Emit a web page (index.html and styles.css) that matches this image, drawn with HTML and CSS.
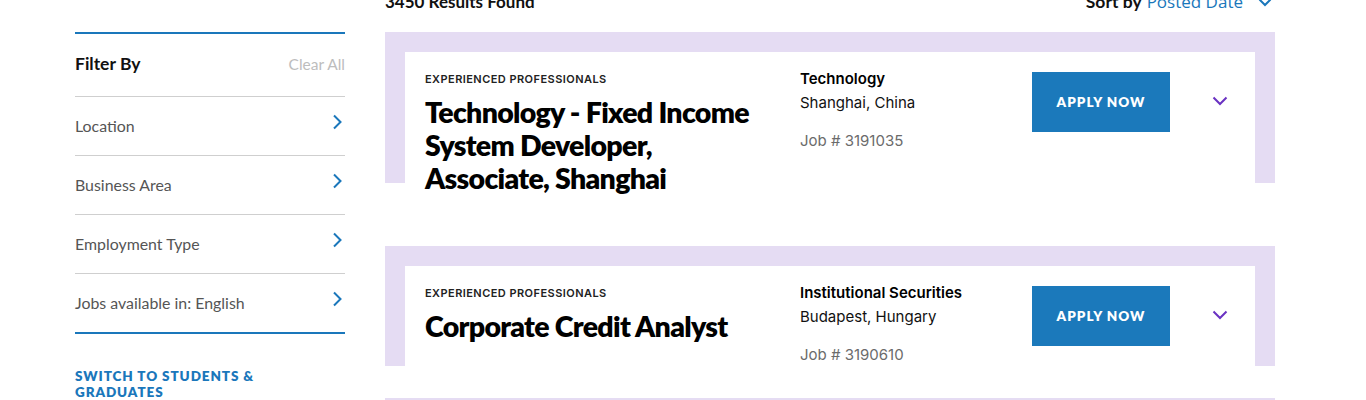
FILE: index.html
```html
<!DOCTYPE html>
<html lang="en">
<head>
<meta charset="utf-8">
<title>Job Search Results</title>
<link rel="stylesheet" href="styles.css">
</head>
<body>
<div class="page">
  <aside class="sidebar">
    <div class="filter">
      <div class="filter-head">
        <span class="filter-title">Filter By</span>
        <a class="clear-all" href="#">Clear All</a>
      </div>
      <ul class="filter-list">
        <li class="filter-row"><span>Location</span>
          <svg class="row-chev" viewBox="0 0 10 16" width="10" height="16"><polyline points="2,1.5 8.5,8 2,14.5" fill="none" stroke="#1a77bb" stroke-width="2"/></svg></li>
        <li class="filter-row"><span>Business Area</span>
          <svg class="row-chev" viewBox="0 0 10 16" width="10" height="16"><polyline points="2,1.5 8.5,8 2,14.5" fill="none" stroke="#1a77bb" stroke-width="2"/></svg></li>
        <li class="filter-row"><span>Employment Type</span>
          <svg class="row-chev" viewBox="0 0 10 16" width="10" height="16"><polyline points="2,1.5 8.5,8 2,14.5" fill="none" stroke="#1a77bb" stroke-width="2"/></svg></li>
        <li class="filter-row"><span>Jobs available in: English</span>
          <svg class="row-chev" viewBox="0 0 10 16" width="10" height="16"><polyline points="2,1.5 8.5,8 2,14.5" fill="none" stroke="#1a77bb" stroke-width="2"/></svg></li>
      </ul>
    </div>
    <a class="switch-link" href="#">Switch to Students &amp; Graduates</a>
  </aside>

  <main class="results">
    <div class="results-head">
      <span class="count">3450 Results Found</span>
      <div class="sort">
        <span class="sort-label">Sort by</span>
        <span class="sort-value">Posted Date</span>
        <svg class="sort-chev" viewBox="0 0 14 9" width="14" height="9"><polyline points="1.5,1.5 7,7 12.5,1.5" fill="none" stroke="#1a77bb" stroke-width="2"/></svg>
      </div>
    </div>

    <article class="job">
      <div class="job-card">
        <div class="job-main">
          <div class="eyebrow">Experienced Professionals</div>
          <h2 class="job-title">Technology - Fixed Income System Developer, Associate, Shanghai</h2>
        </div>
        <div class="job-meta">
          <div class="dept">Technology</div>
          <div class="loc">Shanghai, China</div>
          <div class="jobno">Job # 3191035</div>
        </div>
        <div class="job-action"><a class="apply" href="#">Apply Now</a></div>
        <div class="job-toggle">
          <svg viewBox="0 0 16 10" width="16" height="10"><polyline points="1.5,1.5 8,8 14.5,1.5" fill="none" stroke="#6a32c2" stroke-width="2"/></svg>
        </div>
      </div>
    </article>

    <article class="job">
      <div class="job-card">
        <div class="job-main">
          <div class="eyebrow">Experienced Professionals</div>
          <h2 class="job-title">Corporate Credit Analyst</h2>
        </div>
        <div class="job-meta">
          <div class="dept">Institutional Securities</div>
          <div class="loc">Budapest, Hungary</div>
          <div class="jobno">Job # 3190610</div>
        </div>
        <div class="job-action"><a class="apply" href="#">Apply Now</a></div>
        <div class="job-toggle">
          <svg viewBox="0 0 16 10" width="16" height="10"><polyline points="1.5,1.5 8,8 14.5,1.5" fill="none" stroke="#6a32c2" stroke-width="2"/></svg>
        </div>
      </div>
    </article>

    <article class="job">
      <div class="job-card">
        <div class="job-main">
          <div class="eyebrow">Experienced Professionals</div>
          <h2 class="job-title">Wealth Management Associate</h2>
        </div>
        <div class="job-meta">
          <div class="dept">Wealth Management</div>
          <div class="loc">New York, United States</div>
          <div class="jobno">Job # 3190588</div>
        </div>
        <div class="job-action"><a class="apply" href="#">Apply Now</a></div>
        <div class="job-toggle">
          <svg viewBox="0 0 16 10" width="16" height="10"><polyline points="1.5,1.5 8,8 14.5,1.5" fill="none" stroke="#6a32c2" stroke-width="2"/></svg>
        </div>
      </div>
    </article>
  </main>
</div>
</body>
</html>
```
FILE: styles.css
```css
* { box-sizing: border-box; }
html, body { margin: 0; padding: 0; background: #fff; }
body {
  font-family: Lato, "Open Sans", sans-serif;
  color: #000;
  overflow: hidden;
}
a { text-decoration: none; }

.page {
  display: grid;
  grid-template-columns: 270px 890px;
  column-gap: 40px;
  padding-left: 75px;
  align-items: start;
}

/* ---------- Sidebar ---------- */
.sidebar { padding-top: 32px; }
.filter { border-top: 2px solid #1a77bb; }
.filter-head {
  display: flex;
  justify-content: space-between;
  align-items: center;
  padding: 19px 0 21px;
  line-height: 22px;
}
.filter-title { font-size: 17.5px; font-weight: 700; color: #111; }
.clear-all { font-size: 15.5px; color: #bdbdbd; }
.filter-list { list-style: none; margin: 0; padding: 0; }
.filter-row {
  display: flex;
  justify-content: space-between;
  align-items: center;
  border-top: 1px solid #cfcfcf;
  padding: 18px 3px 18px 0;
  line-height: 22px;
  font-size: 15.9px;
  color: #555;
}
.filter-row:last-child { border-bottom: 2px solid #1a77bb; }
.row-chev { margin-top: -8px; }
.switch-link {
  display: block;
  margin-top: 34px;
  max-width: 200px;
  font-size: 13.5px;
  line-height: 16px;
  font-weight: 800;
  letter-spacing: 0.9px;
  text-transform: uppercase;
  color: #1a77bb;
}

/* ---------- Results ---------- */
.results { margin-top: -10px; }
.results-head {
  display: flex;
  justify-content: space-between;
  align-items: center;
  height: 24px;
  line-height: 24px;
  margin-bottom: 18px;
}
.count { font-size: 17px; font-weight: 700; color: #111; }
.sort { display: flex; align-items: center; gap: 5px; font-size: 17.5px; padding-right: 3px; }
.sort-label { font-weight: 700; color: #111; }
.sort-value { color: #1a77bb; font-family: "Open Sans", sans-serif; font-size: 17px; }
.sort-chev { margin-left: 10px; }

.job {
  position: relative;
  padding: 20px 20px 0;
  margin-bottom: 32px;
}
.job::before {
  content: "";
  position: absolute;
  top: 0; left: 0; right: 0;
  height: 151px;
  max-height: 100%;
  background: #e5dcf3;
}
.job-card {
  position: relative;
  background: #fff;
  display: grid;
  grid-template-columns: 375px 232px 138px 1fr;
  padding: 20px 0 0 20px;
}
.eyebrow {
  font-family: Inter, sans-serif;
  font-size: 11px;
  line-height: 14px;
  font-weight: 600;
  letter-spacing: 0.45px;
  text-transform: uppercase;
  color: #222;
}
.job-title {
  margin: 10px 0 19px;
  max-width: 340px;
  font-family: Lato, "Open Sans", sans-serif;
  font-size: 28.5px;
  line-height: 33px;
  font-weight: 800;
  letter-spacing: -0.7px;
  color: #000;
}
.job-meta { font-family: Inter, sans-serif; font-size: 15px; }
.dept { font-weight: 600; line-height: 16px; margin-top: -1px; color: #000; }
.loc { line-height: 22px; margin-top: 5px; color: #111; }
.jobno { line-height: 22px; margin-top: 16px; color: #6b6b6b; }
.apply {
  display: flex;
  align-items: center;
  justify-content: center;
  height: 60px;
  background: #1b79bb;
  color: #fff;
  font-size: 13.5px;
  font-weight: 800;
  letter-spacing: 1px;
  text-transform: uppercase;
}
.job-toggle {
  display: flex;
  justify-content: flex-end;
  padding: 24px 27px 0 0;
}
```
